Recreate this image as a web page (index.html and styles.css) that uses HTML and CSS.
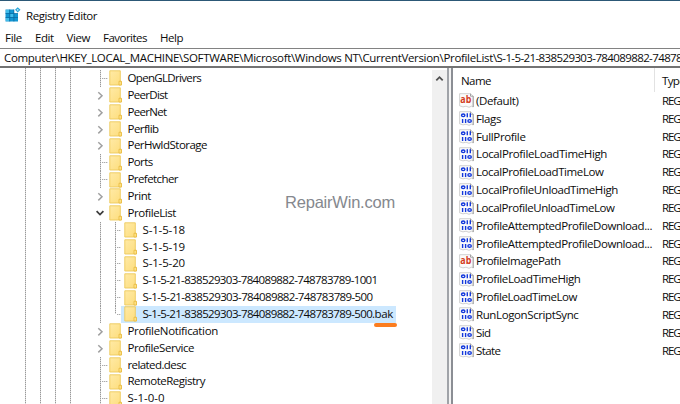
FILE: index.html
```
<!DOCTYPE html>
<html lang="en">
<head>
<meta charset="utf-8">
<title>Registry Editor</title>
<link rel="stylesheet" href="styles.css">
</head>
<body>
<svg width="0" height="0" class="defs">
  <defs>
    <linearGradient id="fold" x1="0" y1="0" x2="1" y2="1"><stop offset="0" stop-color="#ffeaa6"/><stop offset="1" stop-color="#fddd7c"/></linearGradient>
    <symbol id="folder" viewBox="0 0 13 16"><path d="M.8.8H11.3V11L12.4 11.6V15H.8Z" fill="url(#fold)" stroke="#edca5c" stroke-width=".9"/><path d="M10 15V11.3H12.4V15Z" fill="#ffe48c" stroke="#e7b93c" stroke-width=".8"/></symbol>
    <symbol id="page" viewBox="0 0 15 15"><path d="M.6.7H11.5L14.2 3.2V14L12.5 13.2 10 14.3 7 13.2 4 13.9.6 12.8Z" fill="#fbfbfb" stroke="#c5c5c5" stroke-width=".8"/><path d="M11.5.7V3.2H14.2V14" fill="none" stroke="#8e8e8e" stroke-width=".8"/></symbol>
    <symbol id="binary" viewBox="0 0 15 15"><use href="#page"/><g fill="none" stroke="#1238dc" stroke-width="1.4"><ellipse cx="4.2" cy="4.3" rx="1.7" ry="1.3"/><path d="M8.3 2.3V6.3M11.3 2.3V6.3M3.6 7.9V11.9M6.6 7.9V11.9"/><ellipse cx="10.6" cy="9.9" rx="1.7" ry="1.3"/></g></symbol>
  </defs>
</svg>
<div class="window">
  <header class="titlebar">
    <svg class="app" width="16" height="16" viewBox="0 0 16 16"><path d="M.5 2.5H9V6.5H13V14.5H.5Z" fill="#1496d2"/><path d="M1 3H4.2V6H1ZM5.2 7H8.5V10H5.2ZM1 11H4.2V14H1Z" fill="#42bdea"/><path d="M4.7 2.5V14.5M8.9 2.5V14.5M.5 6.5H13M.5 10.5H13" stroke="#08699f" stroke-width=".7"/><path d="M12.7.2L15.5 2.8 12.7 5.5 10 2.8Z" fill="#2ba6d8"/><circle cx="12.7" cy="2.8" r=".9" fill="#b8e8fa"/></svg>
    <span class="title" data-w="71">Registry Editor</span>
  </header>
  <nav class="menu"><span data-w="17">File</span><span data-w="18.5">Edit</span><span data-w="23.5">View</span><span data-w="44">Favorites</span><span data-w="23">Help</span></nav>
  <div class="address"><span data-w="489">Computer\HKEY_LOCAL_MACHINE\SOFTWARE\Microsoft\Windows NT\CurrentVersion\ProfileList</span><span data-w="254">\S-1-5-21-838529303-784089882-748783789-500.bak</span></div>
  <main class="panes">
    <section class="treepane">
      <div class="guides"><i></i><i></i><i></i><i></i></div>
      <div class="tree" id="tree"></div>
      <div class="scroll"><svg width="9" height="7" viewBox="0 0 9 7"><path d="M1.3 5.4L4.5 2.2 7.7 5.4" fill="none" stroke="#505050" stroke-width="1.8"/></svg></div>
      <div class="watermark" data-w="110">RepairWin.com</div>
    </section>
    <div class="splitter"></div>
    <section class="values">
      <div class="head"><span class="name"><span data-w="30">Name</span></span><span class="type"><span data-w="23">Type</span></span></div>
      <div id="values"></div>
    </section>
  </main>
</div>
<script src="app.js"></script>
</body>
</html>
```
FILE: styles.css
```
* { box-sizing: border-box; }
body { margin: 0; background: #fff; color: #0c0c0c; font: 11.5px/17px "Open Sans", "Noto Sans", sans-serif; overflow: hidden; }
.defs { position: absolute; }
.window { width: 680px; height: 404px; overflow: hidden; display: flex; flex-direction: column; border-top: 1px solid #2c5876; white-space: nowrap; }
span[data-w], .watermark { display: inline-block; flex: none; }
.titlebar { height: 28px; display: flex; align-items: center; padding: 0 0 0 5px; }
.app { flex: none; margin-right: 5px; }
.menu { height: 19px; display: flex; gap: 13px; padding-left: 5px; line-height: 18px; }
.address { height: 20px; flex: none; display: flex; border-top: 1px solid #828282; border-bottom: 2px solid #737373; padding-left: 4px; line-height: 18px; overflow: hidden; }
.panes { flex: 1; display: flex; min-height: 0; }
.treepane { position: relative; width: 447px; flex: none; display: flex; overflow: hidden; }
.guides { display: flex; width: 93px; padding-left: 25px; gap: 14px; }
.guides i { width: 1px; }
.guides i, .rail, .childrail { background: repeating-linear-gradient(#999 0 1px, #d9d9d9 1px 2px); }
.tree { flex: 1; padding-top: 2px; }
.row { height: 16.86px; display: flex; align-items: center; line-height: 16.86px; }
.toggle { width: 16px; height: 100%; display: flex; align-items: center; flex: none; }
.toggle svg { display: block; margin-left: 3px; }
.toggle .open { margin-left: 2px; }
.rail { width: 1px; height: 100%; margin-left: 7px; }
.dash { width: 6px; height: 1px; margin-left: 1px; background: repeating-linear-gradient(90deg, #aaa 0 1px, #e2e2e2 1px 2px); }
.childgap { width: 28px; height: 100%; display: flex; align-items: center; flex: none; }
.childrail { width: 1px; height: 100%; margin-left: 14px; }
.last .childrail { height: 50%; align-self: flex-start; }
.label { display: flex; align-items: center; height: 100%; }
.label svg { flex: none; margin-right: 5.5px; }
.child .label { padding: 0 3px; }
.selected .label { background: #cce8ff; }
.mark { position: relative; }
.mark::after { content: ""; position: absolute; left: -1px; right: -4px; bottom: -4px; height: 4px; border-radius: 2px; background: #fb7d20; }
.scroll { width: 15px; background: #f0f0f0; margin-top: 2px; padding: 5px 0 0 3px; line-height: 0; }
.watermark { position: absolute; left: 285px; top: 122px; font: 16.5px/24px "Liberation Sans", sans-serif; color: #85888e; }
.splitter { width: 6px; flex: none; border-left: 2px solid #a0a3a8; border-right: 2px solid #8b8e94; background: #f3f3f3; }
.values { flex: 1; min-width: 0; overflow: hidden; }
.head { height: 24px; display: flex; line-height: 25px; }
.head .name { width: 202px; padding-left: 8px; border-right: 1px solid #e2e2e2; flex: none; }
.head .type { padding-left: 7px; }
.value { height: 17.84px; display: flex; align-items: center; line-height: 17.84px; padding-left: 6px; }
.value svg { flex: none; margin-right: 2px; }
.value .text { width: 186px; flex: none; }
.ab { font: bold 10px "Open Sans", sans-serif; fill: #d43b1d; }
```
FILE: app.js
```
const keys = [
  ["OpenGLDrivers", 73.5, "leaf"], ["PeerDist", 40, "closed"], ["PeerNet", 39, "closed"],
  ["Perflib", 31, "closed"], ["PerHwIdStorage", 79.5, "closed"], ["Ports", 25, "leaf"],
  ["Prefetcher", 50.5, "leaf"], ["Print", 23.5, "closed"], ["ProfileList", 48.5, "open"],
  ["S-1-5-18", 42.5, "child"], ["S-1-5-19", 42.5, "child"], ["S-1-5-20", 42.5, "child"],
  ["S-1-5-21-838529303-784089882-748783789-1001", 235, "child"],
  ["S-1-5-21-838529303-784089882-748783789-500", 230, "child"],
  ["S-1-5-21-838529303-784089882-748783789-500.", 232, "selected"],
  ["ProfileNotification", 90.5, "closed"], ["ProfileService", 66.5, "closed"],
  ["related.desc", 58.5, "leaf"], ["RemoteRegistry", 77.5, "leaf"], ["S-1-0-0", 37, "leaf"]
];
const values = [
  ["(Default)", 42.5, "s"], ["Flags", 25], ["FullProfile", 49.5], ["LocalProfileLoadTimeHigh", 131],
  ["LocalProfileLoadTimeLow", 127.5], ["LocalProfileUnloadTimeHigh", 142], ["LocalProfileUnloadTimeLow", 138.5],
  ["ProfileAttemptedProfileDownload...", 176], ["ProfileAttemptedProfileDownload...", 176],
  ["ProfileImagePath", 84.5, "s"], ["ProfileLoadTimeHigh", 104.5], ["ProfileLoadTimeLow", 101],
  ["RunLogonScriptSync", 102.5], ["Sid", 14.5], ["State", 24.5]
];
const folder = '<svg width="13" height="16"><use href="#folder"/></svg>';
const toggles = {
  closed: '<svg width="9" height="11" viewBox="0 0 9 11"><path d="M2.3 2.2L6 5.8 2.3 9.4" fill="none" stroke="#a0a0a0" stroke-width="1.5"/></svg>',
  open: '<svg class="open" width="10" height="8" viewBox="0 0 10 8"><path d="M1.6 2.2L5 5.6 8.4 2.2" fill="none" stroke="#3b3b3b" stroke-width="1.7"/></svg>',
  leaf: '<i class="rail"></i><i class="dash"></i>'
};
document.getElementById("tree").innerHTML = keys.map(([name, w, kind]) => {
  const child = kind === "child" || kind === "selected";
  const lead = child
    ? '<span class="childgap"><i class="rail"></i><i class="childrail"></i><i class="dash"></i></span>'
    : `<span class="toggle">${toggles[kind]}</span>`;
  const mark = kind === "selected" ? '<span class="mark" data-w="18.5">bak</span>' : "";
  return `<div class="row ${child ? "child" : ""} ${kind === "selected" ? "selected last" : ""}">${lead}<span class="label">${folder}<span data-w="${w}">${name}</span>${mark}</span></div>`;
}).join("");
document.getElementById("values").innerHTML = values.map(([name, w, kind]) => {
  const icon = kind === "s"
    ? '<svg width="15" height="15" viewBox="0 0 15 15"><use href="#page"/><text class="ab" x="1.3" y="9.6" textLength="11" lengthAdjust="spacingAndGlyphs">ab</text></svg>'
    : '<svg width="15" height="15"><use href="#binary"/></svg>';
  return `<div class="value">${icon}<span class="text"><span data-w="${w}">${name}</span></span><span data-w="18.5">REG</span></div>`;
}).join("");

document.querySelectorAll("[data-w]").forEach(el => {
  const w = parseFloat(el.dataset.w);
  const spacing = (w - el.getBoundingClientRect().width) / el.textContent.length;
  el.style.letterSpacing = spacing + "px";
});
```
